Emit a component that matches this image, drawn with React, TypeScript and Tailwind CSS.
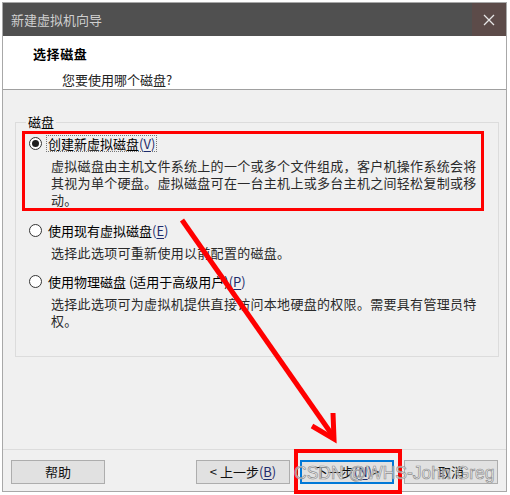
import React from "react";

const cjk = "font-['Microsoft_YaHei','Noto_Sans_CJK_SC',sans-serif]";

type RadioProps = { checked?: boolean };

function Radio({ checked }: RadioProps) {
  return (
    <span className="flex h-[13px] w-[13px] shrink-0 items-center justify-center rounded-full border border-[#333] bg-white">
      {checked ? <span className="h-[7px] w-[7px] rounded-full bg-[#1f1f1f]" /> : null}
    </span>
  );
}

function Mnemonic({ k }: { k: string }) {
  return (
    <span className="text-[#1d2b6b]">
      (<span className="underline underline-offset-2">{k}</span>)
    </span>
  );
}

type OptionProps = {
  checked?: boolean;
  label: React.ReactNode;
  lines: string[];
  focused?: boolean;
};

function DiskOption({ checked, label, lines, focused }: OptionProps) {
  return (
    <div>
      <div className="flex h-[18px] items-center gap-[4px]">
        <Radio checked={checked} />
        <span
          className={
            focused
              ? "border border-dotted border-[#777] px-[1px] leading-[15px]"
              : "px-[2px] leading-[15px]"
          }
        >
          {label}
        </span>
      </div>
      <div className="mt-[5px] pl-[22px] leading-[17px] tracking-[0.3px] text-[#2a2a2a]">
        {lines.map((line) => (
          <div key={line}>{line}</div>
        ))}
      </div>
    </div>
  );
}

function Button({ children, primary }: { children: React.ReactNode; primary?: boolean }) {
  return (
    <button
      type="button"
      className={
        "flex h-[24px] w-[94px] items-center justify-center bg-[#e1e1e1] text-[13px] text-[#111] " +
        (primary ? "border-2 border-[#0078d7]" : "border border-[#adadad]")
      }
    >
      {children}
    </button>
  );
}

export default function App() {
  return (
    <div className={`relative h-[495px] w-[510px] overflow-hidden bg-white text-[13px] text-black ${cjk}`}>
      <div className="ml-[2px] mt-[2px] flex h-[490px] w-[505px] flex-col border border-[#a8a8a8]">
        {/* title bar */}
        <div className="flex h-[33px] shrink-0 items-center bg-[#505050]">
          <span className="flex-1 pl-[8px] text-[13px] text-[#cfcfcf]">新建虚拟机向导</span>
          <div className="flex h-full w-[34px] items-center justify-center bg-[#5c4b49]">
            <svg width="12" height="12" viewBox="0 0 12 12">
              <path d="M1 1L11 11M11 1L1 11" stroke="#e6e6e6" strokeWidth="1.3" />
            </svg>
          </div>
        </div>

        {/* header */}
        <div className="h-[54px] shrink-0 border-b border-[#a0a0a0] bg-white pl-[30px] pt-[9px]">
          <div className="font-bold leading-[17px] tracking-[0.6px]">选择磁盘</div>
          <div className="mt-[9px] pl-[29px] leading-[17px] text-[#222]">您要使用哪个磁盘?</div>
        </div>

        {/* body */}
        <div className="flex-1 bg-[#f0f0f0] pl-[12px] pr-[7px] pt-[24px]">
          <fieldset className="h-[243px] border border-[#dcdcdc] pl-[6px] pr-[14px]">
            <legend className="ml-[4px] px-[2px] leading-[16px]">磁盘</legend>
            <div className="mt-[1px] border-[3px] border-[#ff0000] pl-[4px]">
              <DiskOption
                checked
                focused
                label={
                  <>
                    创建新虚拟磁盘
                    <Mnemonic k="V" />
                  </>
                }
                lines={[
                  "虚拟磁盘由主机文件系统上的一个或多个文件组成，客户机操作系统会将",
                  "其视为单个硬盘。虚拟磁盘可在一台主机上或多台主机之间轻松复制或移",
                  "动。",
                ]}
              />
            </div>
            <div className="mt-[10px] flex flex-col gap-[11px] pl-[7px]">
              <DiskOption
                label={
                  <>
                    使用现有虚拟磁盘
                    <Mnemonic k="E" />
                  </>
                }
                lines={["选择此选项可重新使用以前配置的磁盘。"]}
              />
              <DiskOption
                label={
                  <>
                    使用物理磁盘 (适用于高级用户)
                    <Mnemonic k="P" />
                  </>
                }
                lines={[
                  "选择此选项可为虚拟机提供直接访问本地硬盘的权限。需要具有管理员特",
                  "权。",
                ]}
              />
            </div>
          </fieldset>
        </div>

        {/* footer */}
        <div className="flex h-[42px] shrink-0 items-start border-t border-[#dcdcdc] bg-[#f0f0f0] px-[8px] pt-[10px]">
          <Button>帮助</Button>
          <div className="flex-1" />
          <div className="flex gap-[10px]">
            <Button>
              &lt; 上一步
              <Mnemonic k="B" />
            </Button>
            <div className="relative">
              <Button primary>
                下一步
                <Mnemonic k="N" /> &gt;
              </Button>
              <div className="pointer-events-none absolute -bottom-[10px] -left-[6px] -right-[8px] -top-[11px] border-[4px] border-[#ff0000]" />
            </div>
            <Button>取消</Button>
          </div>
        </div>
      </div>

      {/* annotation arrow */}
      <svg className="pointer-events-none absolute left-0 top-0" width="510" height="495" viewBox="0 0 510 495">
        <path d="M182 220L333 436" stroke="#ff0000" strokeWidth="5" />
        <path d="M312 426L334 439L333 413" stroke="#ff0000" strokeWidth="5" fill="none" />
      </svg>

      {/* watermark */}
      <div className="pointer-events-none absolute left-[294px] top-[462px] font-['Liberation_Sans',Arial,sans-serif] text-[17.5px] leading-[22px] text-white/60 [-webkit-text-stroke:0.7px_#909090]">
        CSDN @WHS-John Greg
      </div>
    </div>
  );
}
